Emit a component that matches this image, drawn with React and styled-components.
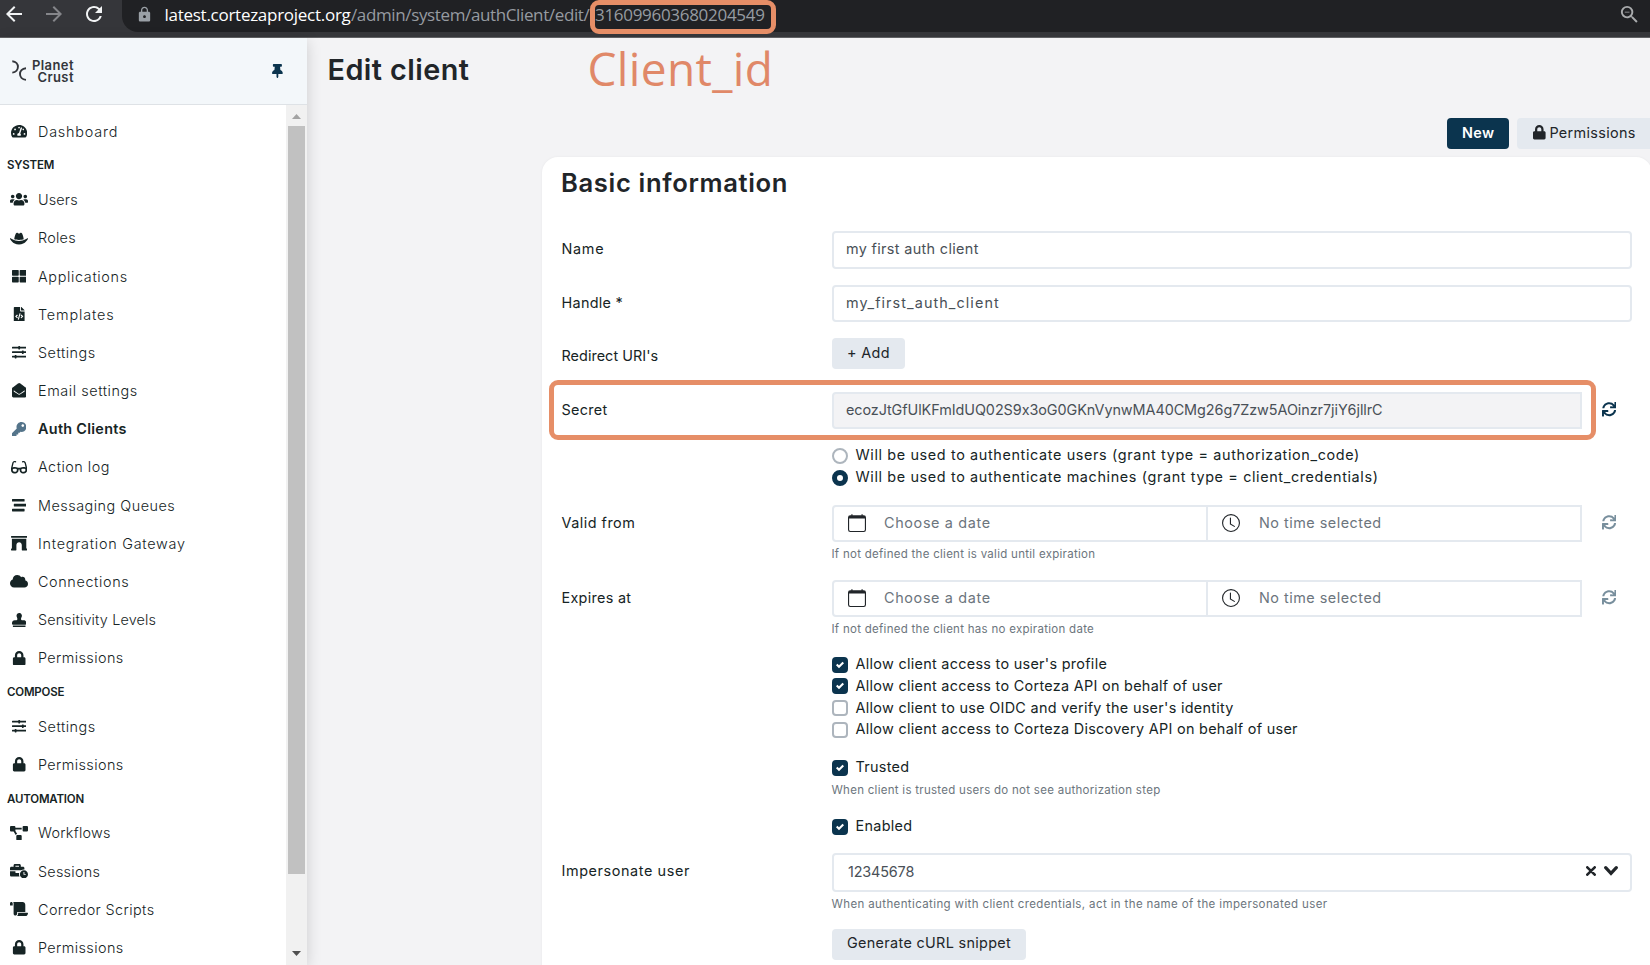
import React, { useState } from 'react';
import styled, { createGlobalStyle } from 'styled-components';
import {
	FaTachometerAlt,
	FaUsers,
	FaHatCowboy,
	FaThLarge,
	FaFileCode,
	FaSlidersH,
	FaEnvelopeOpen,
	FaKey,
	FaGlasses,
	FaStream,
	FaArchway,
	FaCloud,
	FaStamp,
	FaLock,
	FaProjectDiagram,
	FaBusinessTime,
	FaScroll,
	FaThumbtack,
	FaSync,
} from 'react-icons/fa';
import { BsCalendar, BsClock } from 'react-icons/bs';
import {
	MdArrowBack,
	MdArrowForward,
	MdRefresh,
	MdLock,
	MdZoomOut,
} from 'react-icons/md';

// width: icon width, the Font Awesome glyphs are not all square
const menu = [
	{
		items: [
			{ icon: FaTachometerAlt, label: 'Dashboard', track: 0.8, width: 16.2 },
		],
	},
	{
		title: 'System',
		items: [
			{ icon: FaUsers, label: 'Users', track: 0.15, width: 18 },
			{ icon: FaHatCowboy, label: 'Roles', track: 0.25, width: 18 },
			{ icon: FaThLarge, label: 'Applications', track: 0.65 },
			{ icon: FaFileCode, label: 'Templates', track: 0.85 },
			{ icon: FaSlidersH, label: 'Settings' },
			{ icon: FaEnvelopeOpen, label: 'Email settings', track: 0.58 },
			{ icon: FaKey, label: 'Auth Clients', active: true, track: 0.3 },
			{ icon: FaGlasses, label: 'Action log', width: 16.2 },
			{ icon: FaStream, label: 'Messaging Queues' },
			{ icon: FaArchway, label: 'Integration Gateway', track: 0.75, width: 16.2 },
			{ icon: FaCloud, label: 'Connections', track: 0.63, width: 18 },
			{ icon: FaStamp, label: 'Sensitivity Levels', track: 0.15 },
			{ icon: FaLock, label: 'Permissions', track: 0.4 },
		],
	},
	{
		title: 'Compose',
		items: [
			{ icon: FaSlidersH, label: 'Settings' },
			{ icon: FaLock, label: 'Permissions', track: 0.4 },
		],
	},
	{
		title: 'Automation',
		items: [
			{ icon: FaProjectDiagram, label: 'Workflows', track: 0.27, width: 18 },
			{ icon: FaBusinessTime, label: 'Sessions', track: 0.25, width: 18 },
			{ icon: FaScroll, label: 'Corredor Scripts', track: 0.4, width: 18 },
			{ icon: FaLock, label: 'Permissions', track: 0.4 },
		],
	},
];

const grants = [
	'Will be used to authenticate users (grant type = authorization_code)',
	'Will be used to authenticate machines (grant type = client_credentials)',
];

const scopes = [
	"Allow client access to user's profile",
	'Allow client access to Corteza API on behalf of user',
	"Allow client to use OIDC and verify the user's identity",
	'Allow client access to Corteza Discovery API on behalf of user',
];

const Check = ({ label, checked, onChange }) => (
	<Option onClick={onChange}>
		<Box $on={checked}>
			{checked && (
				<svg width="8" height="8" viewBox="0 0 8 8">
					<path
						fill="#fff"
						d="M6.564.75l-3.59 3.612-1.538-1.55L0 4.26l2.974 2.99L8 2.193z"
					/>
				</svg>
			)}
		</Box>
		{label}
	</Option>
);

const DateTime = () => (
	<InputGroup>
		<Picker>
			<BsCalendar size={18} />
			Choose a date
		</Picker>
		<Picker $last>
			<BsClock size={18} />
			No time selected
		</Picker>
		<Reload $muted>
			<FaSync />
		</Reload>
	</InputGroup>
);

const App = () => {
	const [grant, setGrant] = useState(1);
	const [access, setAccess] = useState([true, true, false, false]);
	const [trusted, setTrusted] = useState(true);
	const [enabled, setEnabled] = useState(true);

	const toggleAccess = (i) =>
		setAccess(access.map((value, n) => (n === i ? !value : value)));

	return (
		<Window>
			<GlobalStyle />
			<Browser>
				<BrowserButtons>
					<MdArrowBack />
					<MdArrowForward color="#85868a" />
					<MdRefresh />
				</BrowserButtons>
				<Omnibox>
					<MdLock size={17} color="#9aa0a6" />
					<Url>
						<Host>latest.cortezaproject.org</Host>
						<Path>/admin/system/authClient/edit/</Path>
						<ClientId>
							316099603680204549
							<IdHighlight />
						</ClientId>
					</Url>
					<MdZoomOut size={23} color="#a9abad" />
				</Omnibox>
			</Browser>

			<Body>
				<Sidebar>
					<Brand>
						<Logo>
							<svg width="15" height="21" viewBox="0 0 15 21">
								<g fill="none" stroke="#33363b" strokeWidth="1.9">
									<path d="M0.3 1.2C7.8 1.6 7.8 12 0.3 12.6" />
									<path d="M14 8.2C6 8.7 6 19.3 14 19.9" />
								</g>
							</svg>
							<LogoText>
								<span>Planet</span>
								<span>Crust</span>
							</LogoText>
						</Logo>
						<Pin />
					</Brand>
					<MenuArea>
						<Nav>
							{menu.map(({ title, items }, i) => (
								<React.Fragment key={i}>
									{title && <NavTitle>{title}</NavTitle>}
									{items.map(({ icon: Icon, label, active, track, width }) => (
										<NavItem key={label} $active={active} $track={track}>
											<NavIcon $active={active} $width={width}>
												<Icon />
											</NavIcon>
											{label}
										</NavItem>
									))}
								</React.Fragment>
							))}
						</Nav>
						<Scrollbar>
							<svg width="9" height="5" viewBox="0 0 9 5">
								<path fill="#a3a3a3" d="M0 5L4.5 0L9 5z" />
							</svg>
							<Thumb />
							<svg width="9" height="5" viewBox="0 0 9 5">
								<path fill="#505050" d="M0 0L4.5 5L9 0z" />
							</svg>
						</Scrollbar>
					</MenuArea>
				</Sidebar>

				<Main>
					<Header>
						<Title>Edit client</Title>
						<Annotation>Client_id</Annotation>
					</Header>
					<Toolbar>
						<Button $primary>New</Button>
						<Button $wide>
							<FaLock />
							Permissions
						</Button>
					</Toolbar>

					<Card>
						<CardTitle>Basic information</CardTitle>

						<Row $h={38} $mb={16}>
							<Label $lift={4} $track={0.7}>
								Name
							</Label>
							<Input $lift={4} $track={0.35}>
								my first auth client
							</Input>
						</Row>
						<Row $h={37} $mb={16}>
							<Label>Handle *</Label>
							<Input $track={1.08}>my_first_auth_client</Input>
						</Row>
						<Row $h={31} $mb={23}>
							<Label $drop={6} $track={0.05}>
								Redirect URI's
							</Label>
							<Button>+ Add</Button>
						</Row>
						<Row $h={37} $mb={15}>
							<Label>Secret</Label>
							<InputGroup>
								<Input $disabled $track={-0.06}>
									ecozJtGfUlKFmIdUQ02S9x3oG0GKnVynwMA40CMg26g7Zzw5AOinzr7jiY6jllrC
								</Input>
								<Reload>
									<FaSync />
								</Reload>
							</InputGroup>
							<SecretHighlight />
						</Row>
						<Options $mb={17.4}>
							{grants.map((label, i) => (
								<Option key={label} $track={0.63} onClick={() => setGrant(i)}>
									<Radio $on={grant === i} />
									{label}
								</Option>
							))}
						</Options>

						<Row $h={37}>
							<Label $track={0.5}>Valid from</Label>
							<DateTime />
						</Row>
						<Help $mb={14}>
							If not defined the client is valid until expiration
						</Help>
						<Row $h={37}>
							<Label>Expires at</Label>
							<DateTime />
						</Row>
						<Help $mb={11.7}>
							If not defined the client has no expiration date
						</Help>

						<Options $mb={16}>
							{scopes.map((label, i) => (
								<Check
									key={label}
									label={label}
									checked={access[i]}
									onChange={() => toggleAccess(i)}
								/>
							))}
						</Options>
						<Options>
							<Check
								label="Trusted"
								checked={trusted}
								onChange={() => setTrusted(!trusted)}
							/>
						</Options>
						<Help $mb={13.3}>
							When client is trusted users do not see authorization step
						</Help>
						<Options $mb={16.2}>
							<Check
								label="Enabled"
								checked={enabled}
								onChange={() => setEnabled(!enabled)}
							/>
						</Options>

						<Row $h={39}>
							<Label $lift={4} $track={0.6}>
								Impersonate user
							</Label>
							<Input $track={-0.15}>
								<span>12345678</span>
								<svg width="10" height="10" viewBox="0 0 10 10">
									<path
										d="M1.3 1.3L8.7 8.7M8.7 1.3L1.3 8.7"
										stroke="#212529"
										strokeWidth="2.6"
										strokeLinecap="round"
									/>
								</svg>
								<svg width="14" height="10" viewBox="0 0 14 10">
									<path
										d="M1.7 1.7L7 7.3L12.3 1.7"
										fill="none"
										stroke="#212529"
										strokeWidth="3.2"
										strokeLinecap="round"
									/>
								</svg>
							</Input>
						</Row>
						<Help $mb={13} $track={0.38}>
							When authenticating with client credentials, act in the name of the
							impersonated user
						</Help>
						<Row $h={31}>
							<Label />
							<Button $lift={4}>Generate cURL snippet</Button>
						</Row>
					</Card>
				</Main>
			</Body>
		</Window>
	);
};

export default App;

const GlobalStyle = createGlobalStyle`
	* {
		box-sizing: border-box;
	}
	body {
		margin: 0;
		overflow: hidden;
		font-family: 'Inter', sans-serif;
		font-size: 14.4px;
		color: #162425;
	}
	svg {
		flex: none;
		display: block;
	}
`;

const Window = styled.div`
	height: 965px;
	display: flex;
	flex-direction: column;
	overflow: hidden;
	background: #f3f3f5;
`;

const Browser = styled.div`
	height: 38px;
	flex: none;
	display: flex;
	background: #35363a;
	border-bottom: 1px solid #606164;
`;

const BrowserButtons = styled.div`
	width: 122px;
	height: 28px;
	padding-left: 2px;
	display: flex;
	align-items: center;
	gap: 16px;
	color: #f1f3f4;
	font-size: 24px;
`;

const Omnibox = styled.div`
	flex: 1;
	height: 32px;
	padding: 0 9px 4px 14px;
	display: flex;
	align-items: center;
	justify-content: space-between;
	background: #202124;
	border-radius: 0 0 0 16px;
`;

const Url = styled.div`
	flex: 1;
	margin-left: 11.5px;
	display: flex;
	font-family: 'Open Sans', sans-serif;
	font-size: 17px;
	color: #969ba1;
	white-space: nowrap;
`;

const Host = styled.span`
	color: #fff;
	letter-spacing: -0.27px;
	width: 186.5px;
`;

const Path = styled.span`
	letter-spacing: -0.37px;
	width: 244px;
`;

const ClientId = styled.span`
	position: relative;
	letter-spacing: -0.3px;
`;

const IdHighlight = styled.i`
	position: absolute;
	left: -5px;
	top: -3px;
	width: 186px;
	height: 34px;
	border: 5px solid #e68e67;
	border-radius: 9px;
`;

const Body = styled.div`
	flex: 1;
	min-height: 0;
	display: flex;
`;

const Sidebar = styled.aside`
	width: 307px;
	flex: none;
	display: flex;
	flex-direction: column;
	background: #fff;
	box-shadow: 0 3px 14px rgba(0, 0, 0, 0.16);
`;

const Brand = styled.div`
	height: 67px;
	padding: 0 24px 0 12px;
	display: flex;
	align-items: center;
	justify-content: space-between;
	background: #f3f7fa;
	border-bottom: 1px solid #dee2e6;
	color: #0b344e;
`;

const Pin = styled(FaThumbtack)`
	width: 10.8px;
	height: 14.4px;
`;

const Logo = styled.div`
	display: flex;
	gap: 5px;
`;

const LogoText = styled.div`
	display: flex;
	flex-direction: column;
	align-items: flex-end;
	font-size: 13px;
	font-weight: 600;
	line-height: 12px;
	margin-top: -1px;
	letter-spacing: 0.4px;
	color: #33363b;
`;

const MenuArea = styled.div`
	flex: 1;
	min-height: 0;
	display: flex;
`;

const Nav = styled.nav`
	flex: 1;
	padding-top: 7.2px;
	overflow: hidden;
`;

const NavTitle = styled.div`
	height: 30.2px;
	padding-left: 7px;
	font-size: 11.5px;
	font-weight: 600;
	line-height: 30px;
	letter-spacing: -0.2px;
	text-transform: uppercase;
`;

const NavItem = styled.div`
	height: 38.2px;
	display: flex;
	align-items: center;
	font-weight: ${(props) => (props.$active ? 600 : 300)};
	letter-spacing: ${(props) => props.$track ?? 0.5}px;
`;

const NavIcon = styled.span`
	width: 38px;
	flex: none;
	display: flex;
	justify-content: center;

	svg {
		width: ${(props) => props.$width || 14.4}px;
		height: 14.4px;
		color: ${(props) => (props.$active ? '#54748a' : '#162425')};
	}
`;

const Scrollbar = styled.div`
	width: 21px;
	padding: 9px 2px;
	display: flex;
	flex-direction: column;
	align-items: center;
	background: #f1f1f1;
`;

const Thumb = styled.div`
	width: 17px;
	height: 748px;
	margin: 7px 0 auto;
	background: #c1c1c1;
`;

const Main = styled.main`
	flex: 1;
	min-width: 0;
`;

const Header = styled.div`
	position: relative;
	height: 80px;
	padding: 14px 0 0 20.5px;
`;

const Title = styled.h1`
	margin: 0;
	font-size: 28.8px;
	font-weight: 600;
	line-height: 36px;
	letter-spacing: 0.45px;
	color: #212529;
`;

const Annotation = styled.span`
	position: absolute;
	left: 280.5px;
	top: -2px;
	font-family: 'Open Sans', sans-serif;
	font-size: 46px;
	line-height: 64px;
	letter-spacing: 0.35px;
	color: #e08868;
`;

const Toolbar = styled.div`
	width: 1343px;
	height: 39px;
	display: flex;
	gap: 8px;
	padding-left: 1140px;
`;

const Button = styled.button`
	height: 31px;
	flex: none;
	justify-self: start;
	display: flex;
	align-items: center;
	gap: 3.5px;
	padding: 0 15px ${(props) => props.$lift || 2}px;
	${(props) => props.$wide && 'width: 140px; padding-left: 16px;'}
	border: none;
	border-radius: 4px;
	font-family: inherit;
	font-size: 14.4px;
	font-weight: ${(props) => (props.$primary ? 600 : 400)};
	letter-spacing: 0.33px;
	white-space: nowrap;
	color: ${(props) => (props.$primary ? '#fff' : '#212529')};
	background: ${(props) => (props.$primary ? '#0b344e' : '#e4e9ef')};

	svg {
		width: 12.6px;
		height: 14.4px;
	}
`;

const Card = styled.section`
	width: 1110px;
	height: 830px;
	margin-left: 235px;
	padding: 0 20px;
	background: #fff;
	border-radius: 16px;
	box-shadow: 0 0 3px rgba(0, 0, 0, 0.05);
	color: #162425;
`;

const CardTitle = styled.h2`
	height: 74px;
	margin: 0 0 0 -1px;
	padding-top: 11px;
	font-size: 25.6px;
	font-weight: 600;
	line-height: 30px;
	letter-spacing: 0.65px;
	color: #212529;
`;

const Row = styled.div`
	position: relative;
	display: grid;
	grid-template-columns: 270px 800px;
	height: ${(props) => props.$h}px;
	margin-bottom: ${(props) => props.$mb || 0}px;
`;

const Label = styled.label`
	align-self: center;
	margin-left: -0.5px;
	padding-top: ${(props) => props.$drop || 0}px;
	padding-bottom: ${(props) => props.$lift || 2}px;
	letter-spacing: ${(props) => props.$track ?? 0.3}px;
`;

const InputGroup = styled.div`
	display: flex;
	min-width: 0;
`;

const Input = styled.div`
	flex: 1;
	display: flex;
	align-items: center;
	gap: 8px;
	padding: 0 12px ${(props) => props.$lift || 2}px;
	border: 2px solid #e4e9ef;
	border-radius: ${(props) => (props.$disabled ? '4px 0 0 4px' : '4px')};
	background: ${(props) => (props.$disabled ? '#f3f3f5' : '#fff')};
	color: #495057;
	letter-spacing: ${(props) => props.$track}px;

	span {
		flex: 1;
		padding-left: 2px;
	}
`;

const Reload = styled.button`
	width: 50px;
	flex: none;
	display: flex;
	align-items: center;
	padding: 0 0 2px 20px;
	border: none;
	background: none;
	font-size: 14.4px;
	color: #0b344e;
	opacity: ${(props) => (props.$muted ? 0.55 : 1)};
`;

const SecretHighlight = styled.i`
	position: absolute;
	left: -13px;
	top: -12px;
	width: 1047px;
	height: 60px;
	border: 5px solid #e68e67;
	border-radius: 9px;
`;

const Picker = styled.div`
	flex: 1;
	display: flex;
	align-items: center;
	gap: ${(props) => (props.$last ? 19 : 18)}px;
	padding: 0 14px 1px;
	border: 2px solid #e4e9ef;
	border-radius: ${(props) => (props.$last ? 0 : '4px 0 0 4px')};
	${(props) => props.$last && 'margin-left: -2px;'}
	color: #6c757d;
	letter-spacing: ${(props) => (props.$last ? 0.5 : 0.65)}px;

	svg {
		color: #212529;
	}
`;

const Options = styled.div`
	margin-left: 270px;
	margin-bottom: ${(props) => props.$mb || 0}px;
`;

const Option = styled.div`
	height: 21.8px;
	display: flex;
	align-items: center;
	gap: 7.5px;
	letter-spacing: ${(props) => props.$track ?? 0.3}px;
	white-space: nowrap;
`;

const Radio = styled.span`
	width: 16px;
	height: 16px;
	margin-top: 2px;
	border: ${(props) => (props.$on ? '5px solid #0b344e' : '2px solid #adb5bd')};
	border-radius: 50%;
	background: #fff;
`;

const Box = styled.span`
	width: 16px;
	height: 16px;
	margin-top: 2px;
	display: flex;
	align-items: center;
	justify-content: center;
	border: 2px solid ${(props) => (props.$on ? '#0b344e' : '#adb5bd')};
	border-radius: 4px;
	background: ${(props) => (props.$on ? '#0b344e' : '#fff')};
`;

const Help = styled.div`
	height: 24px;
	margin-left: 269.5px;
	margin-bottom: ${(props) => props.$mb}px;
	font-size: 11.5px;
	line-height: 25px;
	letter-spacing: ${(props) => props.$track ?? 0.28}px;
	color: #6c757d;
`;
